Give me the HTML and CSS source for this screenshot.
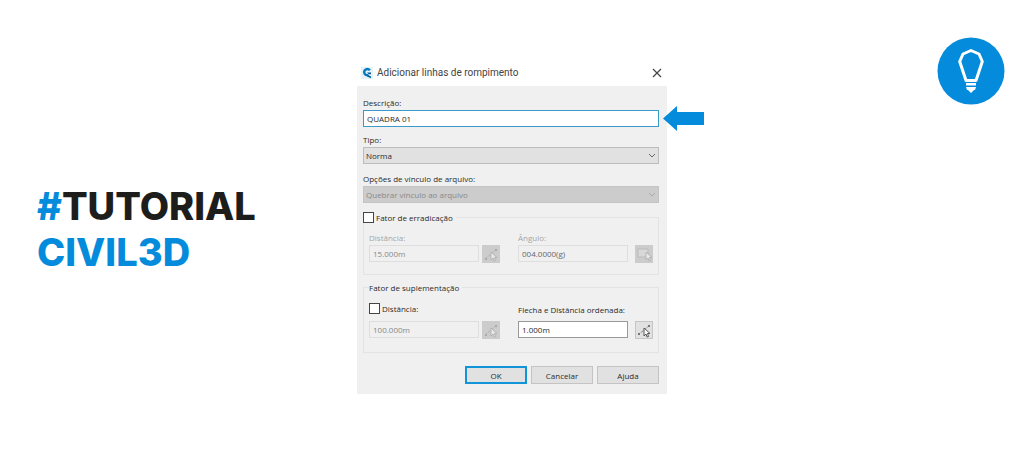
FILE: index.html
```html
<!DOCTYPE html>
<html lang="pt-BR">
<head>
  <meta charset="UTF-8">
  <meta name="viewport" content="width=device-width, initial-scale=1.0">
  <title>Tutorial Civil3D</title>
  <link rel="stylesheet" href="styles.css">
</head>
<body>
  <main class="banner">
    <h1 class="headline"><span class="accent">#</span>TUTORIAL<br><span class="accent">CIVIL3D</span></h1>

    <form class="dialog">
      <header class="titlebar">
        <svg class="app-icon" viewBox="0 0 12 12" aria-hidden="true">
          <rect width="12" height="12" fill="#e3f3fa"/>
          <path d="M9 3.2C6.500 .8 3 2.400 3.200 5.300c.2 2.200 2.300 3.400 4.300 2.600" fill="none" stroke="#0a78bd" stroke-width="2.400"/>
          <path d="M6 5.500h4v1.800H7.800zM7 8l3 1.500v1.800L6 9.500z" fill="#075b98"/>
        </svg>
        <h2 class="title">Adicionar linhas de rompimento</h2>
        <button class="close" type="button" aria-label="Fechar">
          <svg viewBox="0 0 10 10"><path d="M1 1l8 8M9 1L1 9" fill="none" stroke="#444" stroke-width="1.200"/></svg>
        </button>
      </header>

      <div class="content">
        <label class="label" for="descricao">Descrição:</label>
        <div class="highlighted">
          <input class="input active" id="descricao" type="text" value="QUADRA 01">
          <svg class="arrow" viewBox="0 0 41 25" aria-hidden="true"><path d="M0 12.500L14 0v6h27v13H14v6z" fill="#048bdb"/></svg>
        </div>

        <label class="label label-tipo" for="tipo">Tipo:</label>
        <div class="select-box">
          <select class="select" id="tipo"><option>Norma</option></select>
          <svg class="chevron" viewBox="0 0 8 5" aria-hidden="true"><path d="M1 1l3 3 3-3"/></svg>
        </div>

        <label class="label label-vinculo" for="vinculo">Opções de vínculo de arquivo:</label>
        <div class="select-box off">
          <select class="select" id="vinculo" disabled><option>Quebrar vínculo ao arquivo</option></select>
          <svg class="chevron" viewBox="0 0 8 5" aria-hidden="true"><path d="M1 1l3 3 3-3"/></svg>
        </div>

        <fieldset class="group">
          <legend class="legend-check"><label class="check"><input type="checkbox">Fator de erradicação</label></legend>
          <div class="fields">
            <div class="field">
              <label class="label muted" for="distancia">Distância:</label>
              <div class="row">
                <input class="input" id="distancia" type="text" value="15.000m" disabled>
                <button class="pick" type="button" aria-label="Selecionar distância" disabled>
                  <svg viewBox="0 0 16 16"><path class="line" d="M2 13L14 3"/><path class="node" d="M2 12h2v2H2zM12 3h2v2h-2z"/><path class="cursor" d="M8 6v8l2-2 1 3 1.500-.5-1-3H14z"/></svg>
                </button>
              </div>
            </div>
            <div class="field">
              <label class="label muted" for="angulo">Ângulo:</label>
              <div class="row">
                <input class="input dark" id="angulo" type="text" value="004.0000(g)" disabled>
                <button class="pick" type="button" aria-label="Selecionar ângulo" disabled>
                  <svg viewBox="0 0 16 16"><path class="sheet" d="M2 3h10v8H2z"/><path class="cursor" d="M10 6v8l2-2 1 3 1.500-.5-1-3H16z"/></svg>
                </button>
              </div>
            </div>
          </div>
        </fieldset>

        <fieldset class="group supplement">
          <legend class="legend-text">Fator de suplementação</legend>
          <div class="fields">
            <div class="field">
              <label class="check"><input type="checkbox">Distância:</label>
              <div class="row">
                <input class="input" type="text" value="100.000m" aria-label="Distância de suplementação" disabled>
                <button class="pick" type="button" aria-label="Selecionar distância de suplementação" disabled>
                  <svg viewBox="0 0 16 16"><path class="line" d="M2 13L14 3"/><path class="node" d="M2 12h2v2H2zM12 3h2v2h-2z"/><path class="cursor" d="M8 6v8l2-2 1 3 1.500-.5-1-3H14z"/></svg>
                </button>
              </div>
            </div>
            <div class="field">
              <label class="label" for="flecha">Flecha e Distância ordenada:</label>
              <div class="row">
                <input class="input" id="flecha" type="text" value="1.000m">
                <button class="pick" type="button" aria-label="Selecionar flecha">
                  <svg viewBox="0 0 16 16"><path class="line" d="M2 13L14 3"/><path class="node" d="M2 11h2v2H2zM12 3h2v2h-2z"/><path class="cursor" d="M8 6v8l2-2 1 3 1.500-.5-1-3H14z"/></svg>
                </button>
              </div>
            </div>
          </div>
        </fieldset>

        <div class="actions">
          <button class="button primary" type="button">OK</button>
          <button class="button" type="button">Cancelar</button>
          <button class="button" type="button">Ajuda</button>
        </div>
      </div>
    </form>

    <svg class="bulb" viewBox="0 0 68 68" role="img" aria-label="Dica">
      <circle cx="34" cy="34" r="33.500" fill="#048bdb"/>
      <path d="M29 43.500L22.700 24.500 26 17 34 13.500 42 17 45.300 24.500 39 43.500z" fill="none" stroke="#fff" stroke-width="3" stroke-linejoin="round"/>
      <path d="M29 46h10v2.500H29zM29 50h10l-1 3h-8zM31 53h6l-3 3z" fill="#fff"/>
    </svg>
  </main>
</body>
</html>
```

FILE: styles.css
```css
* {
  box-sizing: border-box;
}

body {
  margin: 0;
  background: #fff;
  color: #2a2a2a;
  font-family: "Open Sans", sans-serif;
  font-size: 8px;
  font-weight: 500;
}

.banner {
  display: grid;
  grid-template-columns: 1fr minmax(0, 310px) 1fr;
  align-items: center;
  min-height: 100vh;
  padding-bottom: 3px;
}

.headline {
  margin: 0;
  padding-left: 37px;
  color: #1d1d1b;
  font-family: Inter, sans-serif;
  font-size: 38px;
  font-weight: 800;
  line-height: 46px;
}

.accent {
  color: #048bdb;
}

.bulb {
  width: 68px;
  margin: 37px 19px 0 0;
  align-self: start;
  justify-self: end;
}

/* Dialog window */
.titlebar {
  display: flex;
  align-items: center;
  gap: 4px;
  height: 22px;
  padding: 0 5px 4px 4px;
}

.app-icon {
  width: 12px;
  height: 12px;
}

.title {
  margin: 0;
  flex: 1;
  color: #444;
  font-family: Roboto, sans-serif;
  font-size: 10px;
  font-weight: 400;
  line-height: 16px;
}

.close {
  width: 10px;
  height: 10px;
  padding: 0;
  border: 0;
  background: none;
}

.close svg,
.pick svg {
  display: block;
  width: 100%;
}

.content {
  padding: 12px 8px 10px 6px;
  background: #f0f0f0;
}

.label {
  display: block;
  margin-bottom: 2px;
  line-height: 10px;
  white-space: nowrap;
}

.label-tipo {
  margin-top: 8px;
}

.label-vinculo {
  margin-top: 10px;
}

.muted {
  color: #a5a5a5;
}

.input,
.select,
.button {
  font: inherit;
  color: inherit;
}

.input {
  display: block;
  width: 110px;
  height: 17px;
  padding: 0 3px;
  border: 1px solid #999;
  border-radius: 0;
  background: #fff;
}

.input:disabled {
  border-color: #dedede;
  background: #f0f0f0;
  color: #888;
}

.input.dark:disabled {
  color: #666;
}

.highlighted {
  position: relative;
}

.input.active {
  width: 100%;
  border-color: #3a9bcb;
}

/* Arrow lies over the dialog edge, pointing at the field */
.arrow {
  position: absolute;
  left: 100%;
  top: -4px;
  width: 41px;
  height: 25px;
  margin-left: 4px;
}

.select-box {
  display: grid;
  align-items: center;
}

.select-box > * {
  grid-area: 1 / 1;
}

.select {
  width: 100%;
  height: 17px;
  padding: 0 2px;
  appearance: none;
  border: 1px solid #bdbdbd;
  border-radius: 0;
  background: #e1e1e1;
}

.select:disabled {
  border-color: #c4c4c4;
  background: #ccc;
  color: #888;
  opacity: 1;
}

.chevron {
  width: 8px;
  justify-self: end;
  margin-right: 3px;
  fill: none;
  stroke: #666;
  pointer-events: none;
}

.off .chevron {
  stroke: #aaa;
}

/* Groups */
.group {
  min-width: 0;
  margin: 9px 0 0;
  padding: 10px 5px 11px;
  border: 1px solid #e3e3e3;
}

.group legend {
  height: 11px;
  padding: 0 3px 0 0;
  line-height: 11px;
}

.legend-check {
  margin-left: -6px;
}

.supplement {
  margin-top: 7px;
  padding-bottom: 13px;
}

.check {
  display: flex;
  align-items: center;
  gap: 2px;
}

.check input {
  width: 11px;
  height: 11px;
  margin: 0;
  appearance: none;
  border: 1px solid #444;
  background: #fff;
}

.fields {
  display: grid;
  grid-template-columns: 131fr 135fr;
  gap: 18px;
  align-items: end;
}

.supplement .check {
  margin-bottom: 7px;
}

.supplement .label {
  margin-bottom: 6px;
}

.row {
  display: flex;
  justify-content: space-between;
}

.pick {
  width: 18px;
  height: 18px;
  padding: 0;
  border: 1px solid #c6c6c6;
  background: #e1e1e1;
}

.pick:disabled {
  border-color: #ccc;
  background: #ccc;
}

.pick .line {
  stroke: #888;
  stroke-dasharray: 3 1;
}

.pick .node {
  fill: #777;
}

.pick .cursor {
  fill: #fff;
  stroke: #555;
}

.pick:disabled .line {
  stroke: #b0b0b0;
}

.pick:disabled .node {
  fill: #aaa;
}

.pick:disabled .cursor {
  fill: #e8e8e8;
  stroke: #b5b5b5;
}

.pick .sheet {
  fill: #d8d8d8;
  stroke: #bbb;
}

.actions {
  display: flex;
  justify-content: flex-end;
  gap: 4px;
  margin-top: 13px;
}

.button {
  width: 62px;
  height: 18px;
  padding: 0;
  border: 1px solid #c4c4c4;
  background: #e1e1e1;
}

.button.primary {
  border: 2px solid #1295d8;
}
```
